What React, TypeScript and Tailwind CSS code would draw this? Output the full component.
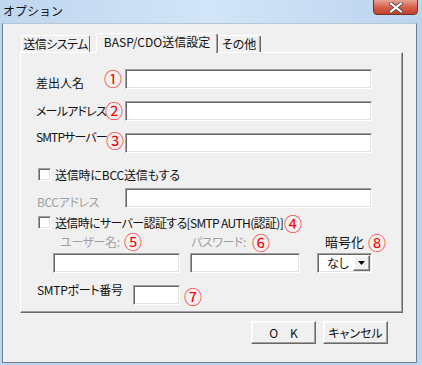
import React from 'react';

const jp = "font-['Noto_Sans_CJK_JP',sans-serif] [font-feature-settings:'palt']";
const sunken =
  "bg-white border border-t-[#a0a0a0] border-l-[#a0a0a0] border-r-white border-b-white shadow-[inset_1px_1px_0_#696969,inset_-1px_-1px_0_#e3e3e3]";
const raised =
  "bg-[#f0f0f0] border border-t-white border-l-white border-r-[#696969] border-b-[#696969] shadow-[inset_-1px_-1px_0_#a0a0a0,inset_1px_1px_0_#f8f8f8]";

// red circled marker
function Mark({ n, className = '' }: { n: string; className?: string }) {
  return (
    <span className={`w-[18px] shrink-0 text-center text-[18px] leading-[12px] tracking-normal text-[#ff0000] ${className}`}>{n}</span>
  );
}

function CheckBox() {
  return <div className={`w-[13px] h-[13px] shrink-0 ${sunken}`}></div>;
}

export default function App() {
  return (
    <div className={`w-[422px] h-[365px] overflow-hidden bg-[#bcd4ee] text-[12px] text-[#111] whitespace-nowrap ${jp}`}>
      {/* title bar */}
      <div className="h-[23px] flex bg-linear-to-r from-[#bfd6ef] via-[#d2e5f8] to-[#bcd4ee]">
        <div className="ml-[3px] mt-[4px] leading-[14px] text-[12px] [font-feature-settings:normal]">オプション</div>
        <div className="ml-auto mr-[4px] w-[45px] h-[16px] -mt-[1px] rounded-b-[4px] border border-[#6e3326] bg-linear-to-b from-[#e8a495] via-[#d4614b] to-[#c2412b] flex items-center justify-center">
          <svg width="14" height="11" viewBox="0 0 14 11">
            <path d="M2 1.5 L12 9.5 M12 1.5 L2 9.5" stroke="#4a4a4a" strokeWidth="3.6" strokeLinecap="square" />
            <path d="M2 1.5 L12 9.5 M12 1.5 L2 9.5" stroke="#ffffff" strokeWidth="2" strokeLinecap="square" />
          </svg>
        </div>
      </div>

      {/* client area */}
      <div className="ml-[2px] w-[415px] h-[340px] border border-[#6d7f94] border-t-[#b9c6d4] bg-[#f0f0f0]">
        {/* tabs */}
        <div className="ml-[17px] mt-[9px] h-[19px] flex items-end">
          <div className="ml-[1px] w-[69px] h-[17px] border-t border-l border-white border-r border-r-[#696969] rounded-t-[2px] flex justify-center leading-[14px] pt-[1px] tracking-[-0.5px]">
            送信システム
          </div>
          <div className="ml-[6px] w-[122px] h-[20px] -mb-[1px] relative z-10 bg-[#f0f0f0] border-t border-l border-white border-r border-r-[#696969] shadow-[inset_-1px_0_0_#a0a0a0] rounded-t-[2px] flex justify-center leading-[14px] pt-[1px]">
            BASP/CDO送信設定
          </div>
          <div className="w-[43px] h-[17px] border-t border-white border-r border-r-[#696969] shadow-[inset_-1px_0_0_#a0a0a0] rounded-t-[2px] flex justify-center leading-[14px] pt-[1px]">
            その他
          </div>
        </div>

        {/* panel */}
        <div className="ml-[17px] w-[383px] h-[261px] border border-t-white border-l-white border-r-[#696969] border-b-[#696969] shadow-[inset_-1px_-1px_0_#a0a0a0] leading-[12px]">
          {/* 差出人名 */}
          <div className="mt-[16px] h-[20px] pl-[15px] flex items-start">
            <span className="w-[68px] mt-[8px]">差出人名</span>
            <Mark n="①" className="mt-[3px]" />
            <div className={`ml-[3px] w-[247px] h-[20px] ${sunken}`}></div>
          </div>

          {/* メールアドレス */}
          <div className="mt-[12px] h-[20px] pl-[15px] flex items-start">
            <span className="w-[69px] mt-[4px] tracking-[-0.8px]">メールアドレス</span>
            <Mark n="②" className="mt-[3px]" />
            <div className={`ml-[2px] w-[247px] h-[20px] ${sunken}`}></div>
          </div>

          {/* SMTPサーバー */}
          <div className="mt-[12px] h-[20px] pl-[15px] flex items-start">
            <span className="w-[70px] -mt-[2px] tracking-[-0.9px]">SMTPサーバー</span>
            <Mark n="③" className="mt-[1px]" />
            <div className={`ml-[1px] w-[247px] h-[20px] ${sunken}`}></div>
          </div>

          {/* BCC checkbox */}
          <div className="mt-[15px] h-[13px] pl-[17px] flex items-center">
            <CheckBox />
            <span className="ml-[4px] tracking-[-0.2px]">送信時にBCC送信もする</span>
          </div>

          {/* BCCアドレス */}
          <div className="mt-[7px] h-[20px] pl-[16px] flex items-start">
            <span className="w-[88px] mt-[8px] text-[#a0a0a0] tracking-[-0.4px]">BCCアドレス</span>
            <div className={`w-[247px] h-[20px] ${sunken}`}></div>
          </div>

          {/* SMTP AUTH checkbox */}
          <div className="mt-[8px] h-[13px] pl-[17px] flex items-center">
            <CheckBox />
            <span className="ml-[4px] tracking-[-0.65px]">送信時にサーバー認証する[SMTP AUTH(認証)]</span>
            <Mark n="④" className="ml-[1px]" />
          </div>

          {/* labels */}
          <div className="mt-[7px] h-[12px] flex items-start">
            <span className="ml-[39px] w-[64px] text-[#a0a0a0] tracking-[-0.4px]">ユーザー名:</span>
            <Mark n="⑤" className="-mt-[1px]" />
            <span className="ml-[49px] w-[61px] text-[#a0a0a0] tracking-[-0.4px]">パスワード:</span>
            <Mark n="⑥" />
            <span className="ml-[55px] w-[43px] text-[13px] leading-[12px]">暗号化</span>
            <Mark n="⑧" />
          </div>

          {/* inputs */}
          <div className="mt-[5px] h-[20px] flex items-start">
            <div className={`ml-[32px] w-[127px] h-[20px] ${sunken}`}></div>
            <div className={`ml-[10px] w-[110px] h-[20px] ${sunken}`}></div>
            <div className={`ml-[17px] w-[55px] h-[20px] flex items-center ${sunken}`}>
              <span className="pl-[9px] flex-1 leading-[14px]">なし</span>
              <div className={`mr-[1px] w-[17px] h-[16px] flex items-center justify-center ${raised}`}>
                <svg width="7" height="4" viewBox="0 0 7 4">
                  <polygon points="0,0 7,0 3.5,4" fill="#000" />
                </svg>
              </div>
            </div>
          </div>

          {/* port */}
          <div className="mt-[12px] h-[20px] pl-[16px] flex items-start">
            <span className="w-[96px] -mt-[1px] tracking-[-0.3px]">SMTPポート番号</span>
            <div className={`w-[47px] h-[20px] ${sunken}`}></div>
            <Mark n="⑦" className="ml-[4px] mt-[5px]" />
          </div>
        </div>

        {/* buttons */}
        <div className="mt-[8px] ml-[248px] flex gap-[7px]">
          <div className={`w-[65px] h-[23px] flex items-center justify-center leading-[14px] ${raised}`}>
            O　K
          </div>
          <div className={`w-[65px] h-[23px] flex items-center justify-center leading-[14px] ${raised}`}>
            キャンセル
          </div>
        </div>
      </div>
    </div>
  );
}
